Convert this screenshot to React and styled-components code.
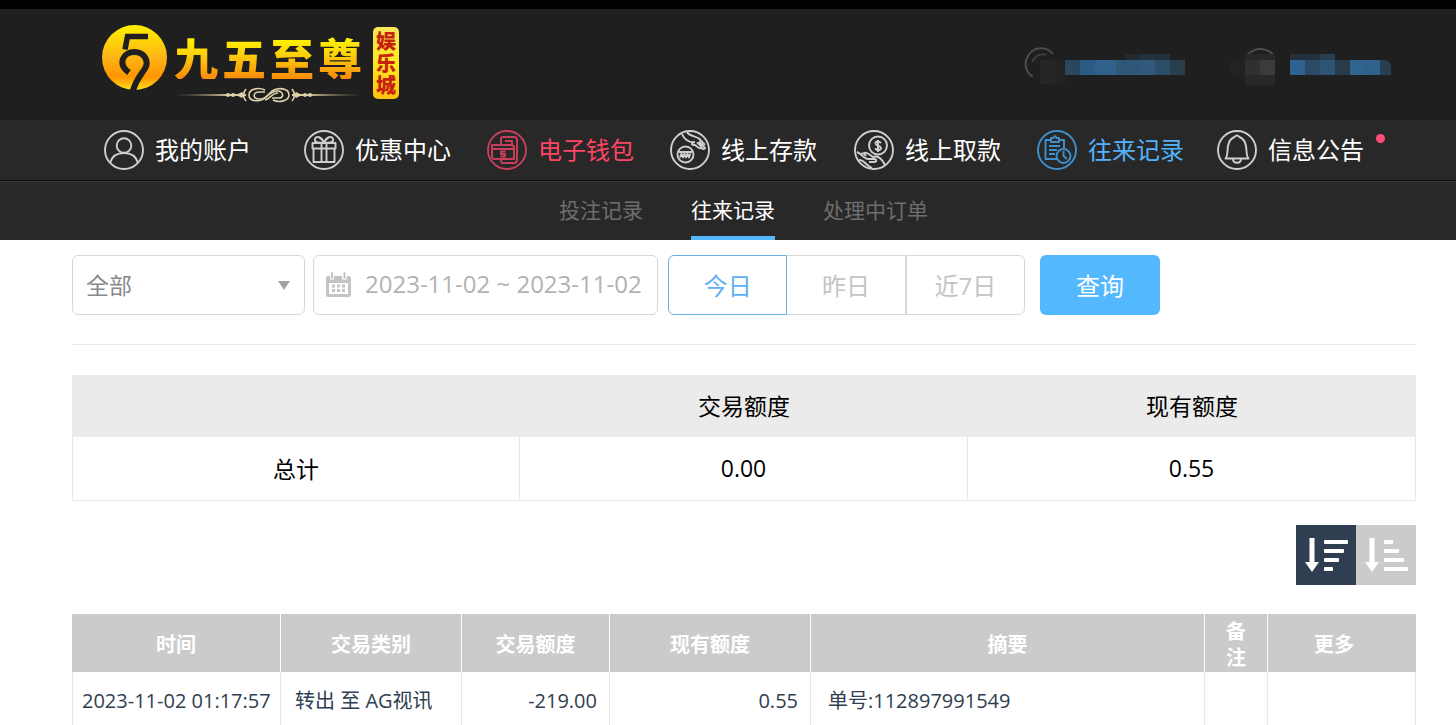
import React, { useState } from "react";
import styled, { createGlobalStyle } from "styled-components";

const GlobalStyle = createGlobalStyle`
  * {
    box-sizing: border-box;
  }
  body {
    margin: 0;
    background: #fff;
    color: #000;
    font-family: "Open Sans", "Noto Sans CJK SC", sans-serif;
    font-size: 23px;
  }
  button, input, select {
    font-family: inherit;
  }
  a {
    color: inherit;
    text-decoration: none;
  }
`;

const Header = styled.header`
  display: flex;
  justify-content: space-between;
  align-items: flex-start;
  min-height: 120px;
  padding: 16px 65px 0 102px;
  border-top: 9px solid #000;
  background: #1f1f1f;
`;

const Logo = styled.a`
  display: flex;
  align-items: flex-start;
`;

const LogoText = styled.div`
  display: flex;
  flex-direction: column;
  gap: 8px;
  margin-left: 6px;
  padding-top: 10px;
`;

const LogoName = styled.div`
  display: flex;
  gap: 4px;
  font-family: "Noto Sans CJK SC", sans-serif;
  font-size: 44px;
  font-weight: 900;
  line-height: 44px;
  span {
    color: transparent;
    background: linear-gradient(#fff200 10%, #fdd00c 45%, #f98f0a 95%);
    background-clip: text;
  }
`;

const Seal = styled.div`
  width: 26px;
  margin: 2px 0 0 11px;
  padding: 3px 1px;
  border-radius: 5px;
  background: linear-gradient(#f5e85a, #ffe81f 50%, #ffc20e);
  color: #c8200f;
  font-family: "Noto Sans CJK SC", sans-serif;
  font-size: 20px;
  font-weight: 900;
  line-height: 22px;
  text-align: center;
`;

const UserLinks = styled.div`
  display: flex;
  gap: 45px;
  padding-top: 22px;
`;

const MainNav = styled.nav`
  display: grid;
  grid-template-columns: 200fr 183fr 183fr 184fr 183fr 180fr 149fr;
  align-items: center;
  height: 61px;
  padding: 0 90px 0 104px;
  background: #282828;
  border-bottom: 1px solid #0e0e0e;
`;

const NavItem = styled.a`
  position: relative;
  display: flex;
  align-items: center;
  gap: 11px;
  color: ${props => props.$color || '#fff'};
  font-size: 24px;
  line-height: 40px;
  white-space: nowrap;
  svg {
    flex: none;
    color: ${props => props.$iconColor || '#cfcfcf'};
  }
`;

const Dot = styled.i`
  position: absolute;
  top: 4px;
  right: -19px;
  width: 9px;
  height: 9px;
  border-radius: 50%;
  background: #ff4c76;
`;

const SubNav = styled.nav`
  display: flex;
  justify-content: center;
  gap: 48px;
  height: 59px;
  padding: 0 41px 0 72px;
  background: #282828;
  border-top: 1px solid #3a3a3a;
`;

const SubNavItem = styled.a`
  border-bottom: 4px solid ${props => props.$active ? '#54b8ff' : 'transparent'};
  color: ${props => props.$active ? '#fff' : '#6e6e6e'};
  font-size: 21px;
  line-height: 56px;
`;

const Content = styled.main`
  padding: 15px 40px 0 72px;
`;

const Filters = styled.form`
  display: flex;
  padding-bottom: 29px;
  border-bottom: 1px solid #e8e8e8;
`;

const Field = styled.label`
  position: relative;
  display: flex;
  align-items: center;
  width: ${props => props.$width};
  height: 60px;
  margin-right: ${props => props.$gap};
  border: 1px solid #d8d8d8;
  border-radius: 6px;
  color: #999;
`;

const Select = styled.select`
  width: 100%;
  height: 100%;
  padding: 0 13px;
  border: 0;
  appearance: none;
  background: none;
  color: #888;
  font-size: 23px;
`;

const Caret = styled.i`
  position: absolute;
  right: 14px;
  border: 6px solid transparent;
  border-top: 9px solid #a3a3a3;
  border-bottom: 0;
  pointer-events: none;
`;

const DateInput = styled.input`
  width: 100%;
  padding: 0 0 4px;
  border: 0;
  outline: 0;
  background: none;
  color: #b2b2b2;
  font-size: 24px;
`;

const Segment = styled.div`
  display: flex;
  width: 357px;
  margin-right: 15px;
`;

const SegmentButton = styled.button`
  flex: 1;
  height: 60px;
  padding: 0 0 2px;
  border: 1px solid ${props => props.$active ? '#66b1e6' : '#d8d8d8'};
  border-left-width: ${props => props.$joined ? 0 : '1px'};
  background: #fff;
  color: ${props => props.$active ? '#5eb0f2' : '#c4c4c4'};
  font-size: 24px;
  &:first-child {
    border-radius: 6px 0 0 6px;
  }
  &:last-child {
    border-radius: 0 6px 6px 0;
  }
`;

const SearchButton = styled.button`
  width: 120px;
  height: 60px;
  padding: 0 0 2px;
  border: 0;
  border-radius: 6px;
  background: #54b8ff;
  color: #fff;
  font-size: 24px;
`;

const Summary = styled.table`
  width: 100%;
  margin-top: 30px;
  border-collapse: separate;
  border-spacing: 0;
  table-layout: fixed;
  text-align: center;
  th {
    height: 62px;
    padding: 0 0 2px;
    background: #ebebeb;
    font-weight: 400;
  }
  td {
    height: 64px;
    padding: 0 0 2px;
    border: 1px solid #e8e8e8;
    border-width: 0 1px 1px 0;
  }
  td:first-child {
    border-left-width: 1px;
  }
`;

const SortBar = styled.div`
  display: flex;
  justify-content: flex-end;
  margin: 24px 0 29px;
`;

const SortButton = styled.button`
  width: 60px;
  height: 60px;
  padding: 0;
  border: 0;
  background: ${props => props.$active ? '#2f3e50' : '#cbcbcb'};
  svg {
    display: block;
  }
`;

const Records = styled.table`
  width: 100%;
  border-collapse: separate;
  border-spacing: 0;
  table-layout: fixed;
  color: #2f3e50;
  font-size: 20px;
  line-height: 26px;
  th {
    height: 58px;
    padding: 4px 20px 0;
    border-right: 1px solid #fff;
    background: #cbcbcb;
    color: #fff;
  }
  th:last-child {
    padding-right: 35px;
    border-color: #cbcbcb;
  }
  td {
    height: 58px;
    padding: 0 12px;
    border-right: 1px solid #e8e8e8;
    white-space: nowrap;
  }
  td:first-child {
    padding-right: 0;
    border-left: 1px solid #e8e8e8;
  }
`;

const Cell = styled.td`
  && {
    padding-left: ${props => props.$indent || '12px'};
  }
  text-align: ${props => props.$align || 'left'};
`;

const Emblem = () => (
  <svg width="66" height="66" viewBox="0 0 66 66" fill="none">
    <defs>
      <linearGradient id="gold" x1="0" y1="0" x2="0" y2="1">
        <stop offset="0" stopColor="#fff000" />
        <stop offset=".5" stopColor="#fdb515" />
        <stop offset=".8" stopColor="#ff9400" />
        <stop offset="1" stopColor="#ffe21a" />
      </linearGradient>
    </defs>
    <circle cx="32.500" cy="32.500" r="32.500" fill="url(#gold)" />
    <g stroke="#1f1f1f">
      <path d="M46 11.500H25.500L23 24.500" strokeWidth="5.500" />
      <path d="M27 47.500C15 39 21 27 32.500 27C42 27 47.500 36 43 43.500C39 50 34 54 30.500 67" strokeWidth="6" />
    </g>
  </svg>
);

const Ornament = () => (
  <svg width="188" height="16" viewBox="0 0 188 16" fill="none">
    <defs>
      <linearGradient id="fade">
        <stop offset="0" stopColor="#d9c99a" stopOpacity="0" />
        <stop offset=".3" stopColor="#d9c99a" />
        <stop offset=".7" stopColor="#d9c99a" />
        <stop offset="1" stopColor="#d9c99a" stopOpacity="0" />
      </linearGradient>
    </defs>
    <path d="M0 7.500L54 7H72V9H54L0 8.500ZM188 7.500L136 7H118V9H136L188 8.500Z" fill="url(#fade)" />
    <g fill="#ded2ab">
      <path d="M62 8L68 5L70 8L68 11ZM128 8L122 5L120 8L122 11Z" />
      <circle cx="54" cy="8" r="2" />
      <circle cx="59" cy="8" r="2" />
      <circle cx="131" cy="8" r="2" />
      <circle cx="136" cy="8" r="2" />
    </g>
    <g stroke="#ded2ab" strokeWidth="1.600">
      <path d="M72 2Q67 8 72 14M118 2Q123 8 118 14" />
      <path d="M91 3C84 0 75 2 75 8C75 15 87 16 93 9L98 4C104 0 115 1 115 8C115 14 105 16 99 13" />
      <path d="M85 12C78 12 79 5 85 5H91M85 12C93 13 96 3 104 4C110 5 110 11 105 11H98M91 13C96 12 98 6 104 6" />
    </g>
  </svg>
);

const UserBlock = ({ blocks, children }) => (
  <svg width="161" height="40" viewBox="0 0 161 40" fill="none">
    {children}
    {blocks.map(([x, y, w, h, fill]) => (
      <rect key={`${x}-${y}`} x={x} y={y} width={w} height={h} fill={fill} />
    ))}
  </svg>
);

const ACCOUNT_BLOCKS = [
  [16, 13, 15, 24, '#252525'],
  [31, 13, 11, 24, '#222'],
  [101, 7, 15, 6, '#222a30'],
  [116, 7, 45, 6, '#22313b'],
  [146, 7, 15, 6, '#1f2021'],
  [41, 13, 15, 15, '#294860'],
  [56, 13, 15, 15, '#2c5b85'],
  [71, 13, 21, 15, '#30618d'],
  [92, 13, 24, 15, '#315777'],
  [116, 13, 15, 15, '#305a7d'],
  [131, 13, 15, 15, '#2b4d67'],
  [146, 13, 15, 15, '#293e4d'],
];

const SERVICE_BLOCKS = [
  [0, 13, 15, 15, '#222'],
  [15, 7, 30, 31, '#282828'],
  [15, 13, 15, 15, '#303030'],
  [30, 13, 15, 15, '#3b3b3b'],
  [60, 7, 15, 6, '#23313c'],
  [75, 7, 15, 6, '#24323e'],
  [90, 7, 15, 6, '#263f51'],
  [60, 13, 15, 15, '#2e6291'],
  [75, 13, 15, 15, '#2c4a66'],
  [90, 13, 15, 15, '#2d5474'],
  [105, 13, 15, 15, '#293b49'],
  [120, 13, 15, 15, '#2f6390'],
  [135, 13, 15, 15, '#30618b'],
];

const NavIcon = ({ children }) => (
  <svg width="40" height="40" viewBox="0 0 40 40" fill="none" stroke="currentColor" strokeWidth="1.900" strokeLinejoin="round">
    <circle cx="20" cy="20" r="19" />
    {children}
  </svg>
);

const UserIcon = () => (
  <NavIcon>
    <circle cx="20" cy="15.500" r="7.300" />
    <path d="M6 33C8 26 13 23 20 23S32 26 34 33" />
  </NavIcon>
);

const GiftIcon = () => (
  <NavIcon>
    <path d="M8.500 13H31.500V18.500H8.500ZM9.500 18.500V32H30.500V18.500M17.500 13V32M22.500 13V32M20 13C16 13 10 13 11 9S18 7 20 13C22 7 28 5 29 9S24 13 20 13" />
  </NavIcon>
);

const WalletIcon = () => (
  <NavIcon>
    <path d="M14 15V9Q14 7 16 7H27Q30 7 30 10V30Q30 33 27 33H16Q14 33 14 31V29M18 11H25V15" />
    <path d="M5 15H24Q27 15 27 18V29H7Q5 29 5 26ZM5 19H27M18.500 21.500H14V24H18V26.500H13.500" />
  </NavIcon>
);

const DepositIcon = () => (
  <NavIcon>
    <circle cx="15.500" cy="24.500" r="8" />
    <path d="M9 22H22M10 27.500L11.500 23.500L13 27.500L14.500 23.500L16 27.500L17.500 23.500L19 27.500L20.500 23.500" />
    <path d="M12 4C14 9 18 12 24 12.500M17 2C19 6 25 6 29 8.500L35 15" />
    <path d="M25 12C21 12 21 16 25 15L29 18C31 19 32 17 30 15L27 12.500M29 11.500L35 18C34 20 32 19 31 17" />
  </NavIcon>
);

const WithdrawIcon = () => (
  <NavIcon>
    <circle cx="24" cy="15.500" r="9" />
    <path d="M27 13C25 11 21.500 11 21.500 13.500S27 15.500 27 18S23 20.500 21 18.500M24 10V22" />
    <path d="M3 22C8 24 10 29 14 29H20C23 29 23 32 20 32H15M7 24Q10 22 12 26M10 23C12 21 16 25 19 27C24 25 28 29 31 35M5 30C11 30 12 36 18 38" />
  </NavIcon>
);

const RecordIcon = () => (
  <NavIcon>
    <path d="M20 29H8.500V10H14M22 10H27V18M14 8H16.500Q18 4 19.500 8H22V12H14ZM12 16H23M12 20H20M12 24H18" />
    <circle cx="26.500" cy="26" r="7" />
    <path d="M26.500 21V26L30 29" />
  </NavIcon>
);

const BellIcon = () => (
  <NavIcon>
    <path d="M8.500 28.500C11 26 10 22 11 16C12 10 15 8 17.500 7Q20 4 22.500 7C25 8 28 10 29 16C30 22 29 26 31.500 28.500ZM16 29C16 34 24 34 24 29" />
  </NavIcon>
);

const CalendarIcon = styled(({ className }) => (
  <svg className={className} width="25" height="25" viewBox="0 0 25 25">
    <path d="M2 4H4V6Q4 8 6 8T8 6V4H16V6Q16 8 18.500 8T21 6V4H23Q25 4 25 6V23Q25 25 23 25H2Q0 25 0 23V6Q0 4 2 4ZM3 11V22H22V11Z" fill="#c4c4c4" fillRule="evenodd" />
    <path d="M6 1V6M18.500 1V6" stroke="#c4c4c4" strokeWidth="2" strokeLinecap="round" />
    <path d="M6 14H19M6 18.500H19" stroke="#c4c4c4" strokeWidth="3" strokeDasharray="3 2" />
  </svg>
))`
  flex: none;
  margin: 0 14px 2px 12px;
`;

const SortIcon = ({ widths }) => (
  <svg width="60" height="60" viewBox="0 0 60 60" fill="#fff">
    <path d="M13.500 13H18.500V37H23L16 47L9 37H13.500Z" />
    {widths.map((width, i) => (
      <rect key={width} x="28" y={15 + i * 9} width={width} height="4" rx="1" />
    ))}
  </svg>
);

const NAV = [
  { label: '我的账户', icon: UserIcon },
  { label: '优惠中心', icon: GiftIcon },
  { label: '电子钱包', icon: WalletIcon, color: '#ff4464', iconColor: '#c93f5b' },
  { label: '线上存款', icon: DepositIcon },
  { label: '线上取款', icon: WithdrawIcon },
  { label: '往来记录', icon: RecordIcon, color: '#54b2fb', iconColor: '#4090cb' },
  { label: '信息公告', icon: BellIcon, dot: true },
];

const TABS = ['投注记录', '往来记录', '处理中订单'];
const RANGES = ['今日', '昨日', '近7日'];
const COLUMNS = [
  ['时间', 209],
  ['交易类别', 181],
  ['交易额度', 148],
  ['现有额度', 201],
  ['摘要', 394],
  ['备注', 63],
  ['更多', 148],
];
const TOTAL_WIDTH = COLUMNS.reduce((sum, [, width]) => sum + width, 0);

const App = () => {
  const [range, setRange] = useState('今日');
  const [descending, setDescending] = useState(true);

  return (
    <>
      <GlobalStyle />
      <Header>
        <Logo href="#">
          <Emblem />
          <LogoText>
            <LogoName>
              {['九', '五', '至', '尊'].map(char => <span key={char}>{char}</span>)}
            </LogoName>
            <Ornament />
          </LogoText>
          <Seal>娱乐城</Seal>
        </Logo>
        <UserLinks>
          <a href="#account" aria-label="account">
            <UserBlock blocks={ACCOUNT_BLOCKS}>
              <path d="M9 30A15 15 0 0 1 4 9A15 15 0 0 1 29 7" stroke="#4c4c4c" strokeWidth="2" />
              <path d="M8 15Q14 5 22 8" stroke="#3c3c3c" strokeWidth="2" />
            </UserBlock>
          </a>
          <a href="#service" aria-label="service">
            <UserBlock blocks={SERVICE_BLOCKS}>
              <path d="M18 7Q30 -3 43 7" stroke="#4c4c4c" strokeWidth="2" />
              <path d="M150 13H154Q161 14 161 20V28H150Z" fill="#293f50" />
            </UserBlock>
          </a>
        </UserLinks>
      </Header>
      <MainNav>
        {NAV.map(({ label, icon: Icon, color, iconColor, dot }) => (
          <NavItem key={label} href="#" $color={color} $iconColor={iconColor}>
            <Icon />
            {label}
            {dot && <Dot />}
          </NavItem>
        ))}
      </MainNav>
      <SubNav>
        {TABS.map(tab => (
          <SubNavItem key={tab} href="#" $active={tab === '往来记录'}>{tab}</SubNavItem>
        ))}
      </SubNav>
      <Content>
        <Filters onSubmit={event => event.preventDefault()}>
          <Field $width="233px" $gap="8px">
            <Select aria-label="交易类别">
              <option>全部</option>
            </Select>
            <Caret />
          </Field>
          <Field $width="345px" $gap="10px">
            <CalendarIcon />
            <DateInput type="text" aria-label="时间" defaultValue="2023-11-02 ~ 2023-11-02" />
          </Field>
          <Segment>
            {RANGES.map((item, i) => (
              <SegmentButton
                key={item}
                type="button"
                $active={item === range}
                $joined={i === 1}
                onClick={() => setRange(item)}
              >
                {item}
              </SegmentButton>
            ))}
          </Segment>
          <SearchButton type="submit">查询</SearchButton>
        </Filters>
        <Summary>
          <thead>
            <tr>
              <th></th>
              <th>交易额度</th>
              <th>现有额度</th>
            </tr>
          </thead>
          <tbody>
            <tr>
              <td>总计</td>
              <td>0.00</td>
              <td>0.55</td>
            </tr>
          </tbody>
        </Summary>
        <SortBar>
          <SortButton $active={descending} aria-label="descending" onClick={() => setDescending(true)}>
            <SortIcon widths={[24, 20, 15, 9]} />
          </SortButton>
          <SortButton $active={!descending} aria-label="ascending" onClick={() => setDescending(false)}>
            <SortIcon widths={[9, 15, 20, 24]} />
          </SortButton>
        </SortBar>
        <Records>
          <colgroup>
            {COLUMNS.map(([name, width]) => (
              <col key={name} style={{ width: `${width / TOTAL_WIDTH * 100}%` }} />
            ))}
          </colgroup>
          <thead>
            <tr>
              {COLUMNS.map(([name]) => <th key={name}>{name}</th>)}
            </tr>
          </thead>
          <tbody>
            <tr>
              <Cell $indent="9px">2023-11-02 01:17:57</Cell>
              <Cell $indent="14px">转出 至 AG视讯</Cell>
              <Cell $align="right">-219.00</Cell>
              <Cell $align="right">0.55</Cell>
              <Cell $indent="17px">单号:112897991549</Cell>
              <Cell />
              <Cell />
            </tr>
          </tbody>
        </Records>
      </Content>
    </>
  );
};

export default App;
